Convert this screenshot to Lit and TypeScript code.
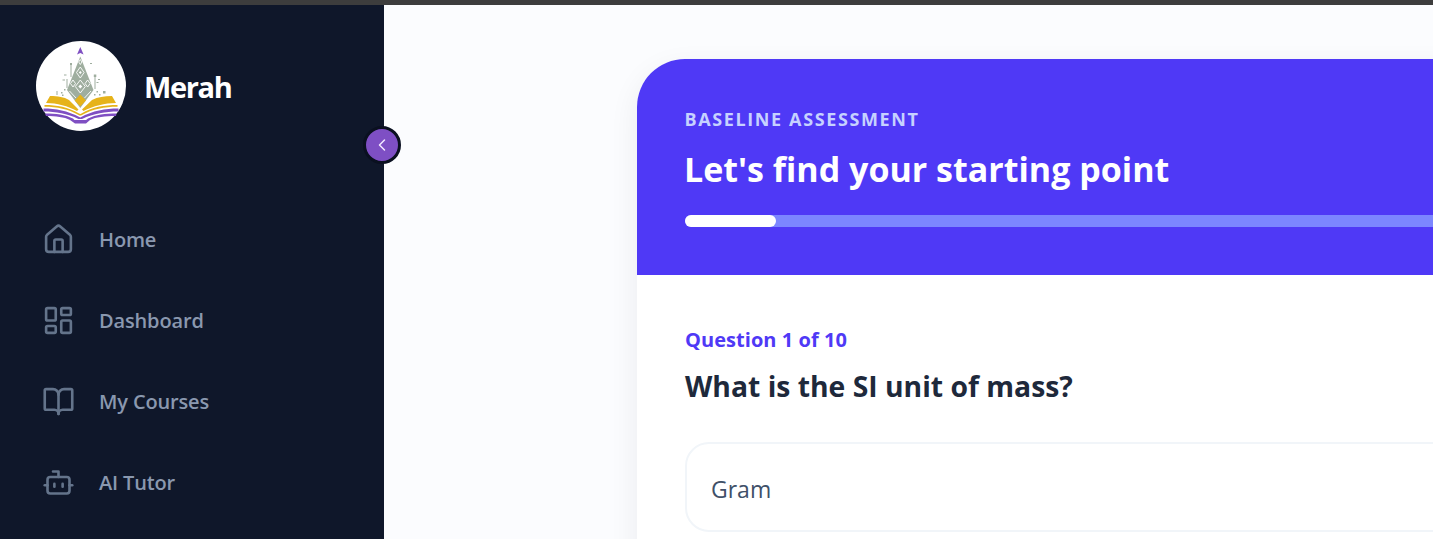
import { LitElement, html, css, svg } from "lit";
import { customElement } from "lit/decorators.js";

const NAV = [
  { label: "Home", icon: svg`<path d="M15 21v-8a1 1 0 0 0-1-1h-4a1 1 0 0 0-1 1v8"/><path d="M3 10a2 2 0 0 1 .709-1.528l7-5.999a2 2 0 0 1 2.582 0l7 5.999A2 2 0 0 1 21 10v9a2 2 0 0 1-2 2H5a2 2 0 0 1-2-2z"/>` },
  { label: "Dashboard", icon: svg`<rect width="7" height="9" x="3" y="3" rx="1"/><rect width="7" height="5" x="14" y="3" rx="1"/><rect width="7" height="9" x="14" y="12" rx="1"/><rect width="7" height="5" x="3" y="16" rx="1"/>` },
  { label: "My Courses", icon: svg`<path d="M12 7v14"/><path d="M3 18a1 1 0 0 1-1-1V4a1 1 0 0 1 1-1h5a4 4 0 0 1 4 4 4 4 0 0 1 4-4h5a1 1 0 0 1 1 1v13a1 1 0 0 1-1 1h-6a3 3 0 0 0-3 3 3 3 0 0 0-3-3z"/>` },
  { label: "AI Tutor", icon: svg`<path d="M12 8V4H8"/><rect width="16" height="12" x="4" y="8" rx="2"/><path d="M2 14h2"/><path d="M20 14h2"/><path d="M15 13v2"/><path d="M9 13v2"/>` },
];

const G = "#9fae9f";
const Y = "#e6b31a";
const P = "#7f4fc2";

const logo = svg`<svg class="logo" viewBox="0 0 90 90" aria-hidden="true">
  <circle cx="45" cy="45" r="45" fill="#fff"/>
  <path d="M44.300 6 L47.600 13.500 L44.300 12 L41 13.500 Z" fill="${P}"/>
  <path d="M44.300 15.500 L57.500 49 L44.300 67 L31 49 Z" fill="${G}"/>
  <g fill="none" stroke="#fff" stroke-width="0.9">
    <path d="M44.300 18.500 l1.600 2.500 -1.600 2.500 -1.600 -2.500z"/>
    <path d="M44.300 26 l3.800 5.500 -3.800 5.500 -3.800 -5.500z"/>
    <path d="M44.300 39 l5 6.500 -5 6.500 -5 -6.500z"/>
    <path d="M37 39 l2.500 3.500 -2.500 3.500 -2.500 -3.500z M51.600 39 l2.500 3.500 -2.500 3.500 -2.500 -3.500z"/>
    <path d="M33.500 50 L40 57 M55 50 L48.500 57"/>
  </g>
  <path d="M44.300 30 l1.500 1.500 -1.500 1.500 -1.500 -1.500z M44.300 43.500 l2 2 -2 2 -2 -2z" fill="#fff"/>
  <g fill="${G}">
    <rect x="34.500" y="24" width="1" height="12"/><rect x="34" y="22" width="2" height="2"/>
    <rect x="58.500" y="36" width="1" height="12"/><rect x="57.800" y="33.500" width="2.500" height="2.500"/>
    <rect x="28" y="33.500" width="2.500" height="1"/><rect x="26.500" y="38.500" width="2.500" height="1"/>
    <rect x="30.500" y="38" width="1" height="9"/><rect x="54" y="22" width="2" height="1"/>
    <rect x="62" y="38" width="2" height="1"/><rect x="60.500" y="41" width="2" height="1"/>
    <rect x="20.500" y="50" width="1" height="4"/><rect x="67" y="50" width="2.500" height="2.500"/>
    <rect x="25" y="51" width="1.500" height="1.500"/><rect x="28" y="48" width="1.500" height="1.500"/>
    <rect x="26" y="53.500" width="1.500" height="1.500"/><rect x="60.500" y="50" width="1.500" height="1.500"/>
    <rect x="63" y="53" width="1.500" height="1.500"/><rect x="58" y="53" width="1.500" height="1.500"/>
  </g>
  <path d="M44.300 53.500 L50 59.500 L44.300 65.500 L38.600 59.500 Z" fill="${Y}"/>
  <path d="M14 55 C22 55 28 56 33 59 L42.500 68.500 L41 70 C32 65 21 62 10 62 Z" fill="${Y}"/>
  <path d="M76 55 C68 55 62 56 56 59 L46 68.500 L47.500 70 C57 65 69 62 80 62 Z" fill="${Y}"/>
  <path d="M8.500 64 C21 64 32 66 43 72.500 L44.300 73 L45.500 72.500 C56 66 68 64 81.500 64 L81.500 65.800 C68 65.800 57 68 45 74.500 L43.500 74.500 C32 68 21 65.800 8.500 65.800 Z" fill="${Y}"/>
  <path d="M7.500 67.500 C20 67.500 31 69.500 44.300 76.500 C57 69.500 69 67.500 82.500 67.500 L82.500 70.500 C69 70.500 58 72.500 46 78 L42.500 78 C31 72.500 20 70.500 7.500 70.500 Z" fill="${P}"/>
  <path d="M9 72.500 C20 72.500 29 73.500 37 77.500 L38.500 79 L50 79 L52 77.500 C60 73.500 69 72.500 80.500 72.500 L80 75 C69 75 60 76 54 79 L50 82.500 L39 82.500 L34 79 C28 76 20 75 10 75 Z" fill="${P}"/>
</svg>`;

@customElement("app-root")
export class AppRoot extends LitElement {
  static styles = css`
    :host { display: block; height: 539px; overflow: hidden; background: #fbfcfe; font-family: "Open Sans", "Noto Sans", sans-serif; }
    .top { height: 5px; background: #3d3d3d; }
    .layout { display: flex; height: 534px; }
    .sidebar { position: relative; flex: 0 0 384px; background: #0f172a; padding: 36px 0 0 36px; box-sizing: border-box; }
    .brand { display: flex; align-items: center; gap: 18px; }
    .logo { width: 90px; height: 90px; display: block; flex: none; }
    .name { color: #fff; font-size: 29px; font-weight: 700; letter-spacing: -1.35px; line-height: 40px; margin-top: 2px; }
    .toggle { position: absolute; top: 121px; left: 363px; width: 32px; height: 32px; border-radius: 50%; background: #7e4fc4; border: 3px solid #0a1020; display: flex; align-items: center; justify-content: center; }
    .toggle svg { width: 20px; height: 20px; stroke: #f3e8ff; fill: none; stroke-width: 1.8; stroke-linecap: round; stroke-linejoin: round; }
    nav { display: flex; flex-direction: column; margin-top: 68px; margin-left: 6px; }
    .item { display: flex; align-items: center; gap: 24px; height: 81px; color: #8a98af; font-size: 20px; font-weight: 600; letter-spacing: -0.15px; }
    .item svg { width: 33px; height: 33px; flex: none; fill: none; stroke: #64748b; stroke-width: 1.9; stroke-linecap: round; stroke-linejoin: round; }
    main { flex: 1; min-width: 0; padding: 54px 0 0 253px; overflow: hidden; }
    .card { width: 1000px; height: 600px; background: #fff; border-radius: 48px 48px 0 0; box-shadow: 0 10px 30px rgba(15, 23, 42, 0.07); }
    .head { height: 216px; box-sizing: border-box; padding: 48px 48px 0; background: #4f39f6; border-radius: 48px 48px 0 0; }
    .eyebrow { color: #c6d2ff; font-size: 18px; font-weight: 700; letter-spacing: 1.62px; line-height: 24px; margin-left: -0.5px; }
    h1 { margin: 13px 0 0 -1px; color: #fff; font-size: 34px; font-weight: 700; line-height: 50px; }
    .track { height: 12px; margin-top: 21px; border-radius: 6px; background: #7c86ff; }
    .fill { height: 100%; width: 91px; border-radius: 6px; background: #fff; }
    .body { padding: 50px 48px 0; }
    .count { color: #4f39f6; font-size: 20px; font-weight: 700; letter-spacing: 0.05px; line-height: 30px; }
    h2 { margin: 13px 0 0; color: #1e293b; font-size: 28.3px; font-weight: 700; line-height: 36px; }
    .option { margin-top: 38px; height: 90px; box-sizing: border-box; padding: 3px 0 0 24px; display: flex; align-items: center; border: 2px solid #f1f5f9; border-radius: 24px; color: #405068; font-size: 23px; font-weight: 500; }
  `;

  render() {
    return html`
      <div class="top"></div>
      <div class="layout">
        <aside class="sidebar">
          <div class="brand">${logo}<span class="name">Merah</span></div>
          <div class="toggle"><svg viewBox="0 0 24 24"><path d="m15 18-6-6 6-6"/></svg></div>
          <nav>
            ${NAV.map((n) => html`<div class="item"><svg viewBox="0 0 24 24">${n.icon}</svg><span>${n.label}</span></div>`)}
          </nav>
        </aside>
        <main>
          <div class="card">
            <div class="head">
              <div class="eyebrow">BASELINE ASSESSMENT</div>
              <h1>Let's find your starting point</h1>
              <div class="track"><div class="fill"></div></div>
            </div>
            <div class="body">
              <div class="count">Question 1 of 10</div>
              <h2>What is the SI unit of mass?</h2>
              <div class="option">Gram</div>
            </div>
          </div>
        </main>
      </div>
    `;
  }
}
